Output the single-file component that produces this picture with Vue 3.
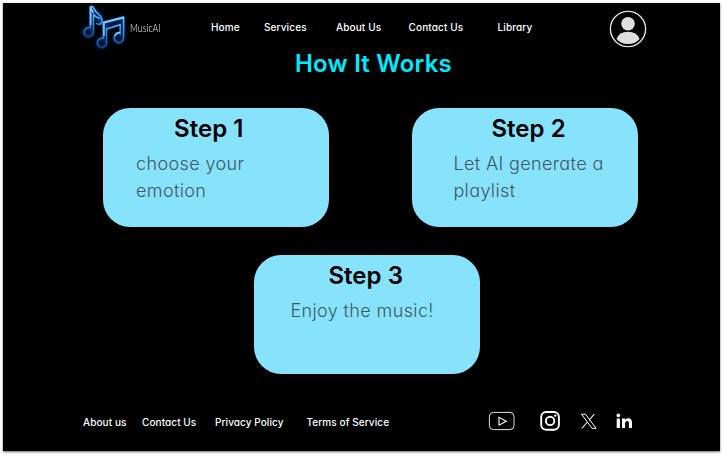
<script setup>
const navLinks = [
  { label: 'Home', key: 'home' },
  { label: 'Services', key: 'services' },
  { label: 'About Us', key: 'about' },
  { label: 'Contact Us', key: 'contact' },
  { label: 'Library', key: 'library' },
]
const steps = [
  { title: 'Step 1', text: 'choose your emotion', key: 'one' },
  { title: 'Step 2', text: 'Let AI generate a playlist', key: 'two' },
  { title: 'Step 3', text: 'Enjoy the music!', key: 'three' },
]
const footerLinks = [
  { label: 'About us', key: 'f-about' },
  { label: 'Contact Us', key: 'f-contact' },
  { label: 'Privacy Policy', key: 'f-privacy' },
  { label: 'Terms of Service', key: 'f-terms' },
]
</script>

<template>
  <div class="page">
    <header class="header">
      <svg class="logo" viewBox="0 0 50 48" width="50" height="48">
        <defs>
          <filter id="glow" x="-40%" y="-40%" width="180%" height="180%">
            <feGaussianBlur stdDeviation="1.700" />
          </filter>
          <filter id="soft" x="-20%" y="-20%" width="140%" height="140%">
            <feGaussianBlur stdDeviation="0.350" />
          </filter>
          <linearGradient id="neon-a" gradientUnits="userSpaceOnUse" x1="0" y1="3" x2="0" y2="34">
            <stop offset="0" stop-color="#7cc8ff" />
            <stop offset="0.55" stop-color="#3a92e8" />
            <stop offset="1" stop-color="#0f3f80" />
          </linearGradient>
          <linearGradient id="neon-b" gradientUnits="userSpaceOnUse" x1="0" y1="14" x2="0" y2="45">
            <stop offset="0" stop-color="#7cc8ff" />
            <stop offset="0.5" stop-color="#3a92e8" />
            <stop offset="1" stop-color="#0f3f80" />
          </linearGradient>
        </defs>
        <g fill="none" stroke="#0a55c8" stroke-width="3" opacity="0.7" filter="url(#glow)">
          <path d="M11.500 25V4L21 14V20L13 11" />
          <circle cx="8" cy="29" r="4.300" />
          <path d="M25 36V20L43 15V33M25 26L41 21" />
          <circle cx="22" cy="40" r="4.300" />
          <circle cx="38.500" cy="35" r="4.300" />
        </g>
        <g fill="none" stroke-width="1.500" stroke-linejoin="round" stroke-linecap="round" filter="url(#soft)">
          <path stroke="url(#neon-a)" d="M10.200 24.500V4Q11.800 2.600 13.300 4.500Q15 8.500 19 11.500Q24 16 21 20.500Q18.500 22 16.500 20.500M13.500 28.500V11.500Q16.500 14.500 20 15.500M13.500 28.500A4.600 4.600 0 1 1 10.200 24.700" />
          <path stroke="url(#neon-b)" d="M23.300 35.500V19.200L43.600 14V34.500A4.700 4.700 0 1 1 40.200 30.500V21.700L26.500 26V40A4.600 4.600 0 1 1 23.300 35.500" />
        </g>
        <path d="M10.800 22V4.500L13.500 10M24 33V19.700L43 15M40.200 29.500Q36 29 34.800 33" fill="none" stroke="#7cc8ff" stroke-width="1.500" filter="url(#soft)" />
      </svg>
      <span class="brand">MusicAI</span>
      <nav class="nav">
        <a v-for="l in navLinks" :key="l.key" :class="l.key"><span>{{ l.label }}</span></a>
      </nav>
      <svg class="avatar" viewBox="0 0 38 38" width="38" height="38">
        <circle cx="19" cy="19" r="17.600" fill="none" stroke="#dedede" stroke-width="1.400" />
        <circle cx="19" cy="13.700" r="6.800" fill="#dedede" />
        <path d="M7.600 29Q10 21.700 19 21.700T30.600 29Q26.500 34 19 34T7.600 29Z" fill="#dedede" />
      </svg>
    </header>

    <h1 class="heading">How It Works</h1>

    <main class="steps">
      <section v-for="s in steps" :key="s.key" class="card" :class="s.key">
        <h2>{{ s.title }}</h2>
        <p>{{ s.text }}</p>
      </section>
    </main>

    <footer class="footer">
      <nav class="footer-nav">
        <a v-for="l in footerLinks" :key="l.key" :class="l.key"><span>{{ l.label }}</span></a>
      </nav>
      <svg class="social" viewBox="0 0 150 28" width="150" height="28">
        <rect x="4.400" y="5.400" width="24.600" height="17.200" rx="4" fill="none" stroke="#e4e4e4" stroke-width="1" />
        <path d="M14 10.300V18.200L21.300 14.250Z" fill="none" stroke="#fff" stroke-width="1.100" />
        <g fill="none" stroke="#fff" stroke-width="1.900">
          <rect x="56.200" y="5" width="17.700" height="17.700" rx="5" />
          <circle cx="65.100" cy="13.900" r="4.200" />
        </g>
        <circle cx="70.300" cy="8.600" r="1.200" fill="#fff" />
        <path d="M96.500 7.200H100.500L111 21.300H107Z" fill="none" stroke="#fff" stroke-width="1" />
        <path d="M109.300 7L104 13.300M102.400 15L96.700 21.500" stroke="#fff" stroke-width="1.100" />
        <g fill="#fff">
          <circle cx="133.300" cy="8.400" r="1.800" />
          <path d="M131.700 11.500H134.900V21H131.700ZM137 11.500H140V12.900C140.700 11.800 141.800 11.200 143.100 11.200C145.900 11.200 147 12.900 147 15.700V21H143.900V16.200C143.900 14.700 143.400 13.900 142.200 13.900C140.800 13.900 140.100 14.800 140.100 16.300V21H137Z" />
        </g>
      </svg>
    </footer>
  </div>
</template>

<style>
body {
  background: #fff;
}
</style>

<style scoped>
.page {
  box-sizing: border-box;
  width: 717px;
  height: 448px;
  margin: 3px 4px 6px 3px;
  background: #000;
  box-shadow: 0 1px 2px rgba(0, 0, 0, 0.6);
  display: flex;
  flex-direction: column;
  color: #fff;
  font-family: Inter, "Open Sans", sans-serif;
  font-feature-settings: "cv11";
}
.header {
  height: 48px;
  display: flex;
  align-items: flex-start;
  padding-left: 77px;
}
.logo {
  flex: none;
}
.brand {
  width: 30px;
  margin-top: 17px;
  font: 300 12px/16px Lato, sans-serif;
  transform: scaleX(0.72);
  transform-origin: left;
  letter-spacing: 0.1px;
  color: #fff;
}
.nav {
  display: grid;
  grid-template-columns: 53px 72px 72.5px 89px 110.5px;
  margin: 16px 0 0 51px;
}
.nav a,
.footer-nav a {
  font-size: 10px;
  line-height: 16px;
  font-weight: 450;
  letter-spacing: 0.13px;
  white-space: nowrap;
}
.avatar {
  margin: 6.500px 0 0 1px;
  flex: none;
}
.heading {
  margin: -4px 0 0 292px;
  height: 34px;
  font-size: 24px;
  line-height: 34px;
  font-weight: 600;
  letter-spacing: 0.2px;
  color: #00eaff;
  white-space: nowrap;
}
.steps {
  display: grid;
  grid-template-columns: 226px 226px;
  grid-template-rows: 119px 119px;
  column-gap: 83.400px;
  row-gap: 28px;
  margin: 27px 0 0 100px;
}
.card {
  box-sizing: border-box;
  width: 226px;
  background: #87e2fc;
  border-radius: 27px;
  padding: 4px 30px 0 33px;
}
.three {
  grid-column: 1 / 3;
  margin-left: 151.4px;
  padding-left: 36px;
}
.two {
  padding: 4px 10px 0 41px;
}
.card h2 {
  margin: 0;
  height: 34px;
  font-size: 24px;
  line-height: 34px;
  font-weight: 600;
  letter-spacing: 0.05px;
  color: #000;
  padding-left: 38px;
  white-space: nowrap;
}
.card p {
  margin: 4px 0 0;
  font-size: 18px;
  line-height: 27px;
  font-weight: 300;
  letter-spacing: 0.38px;
  color: #405860;
}
.one p {
  width: 130px;
}
.footer {
  display: flex;
  margin-top: 33px;
  padding-left: 80px;
}
.footer-nav {
  display: grid;
  grid-template-columns: 59px 73px 91.500px 178px;
  padding-top: 7px;
}
.footer-nav a {
  letter-spacing: 0.08px;
}
.social {
  flex: none;
  margin-top: 0.400px;
}
</style>
